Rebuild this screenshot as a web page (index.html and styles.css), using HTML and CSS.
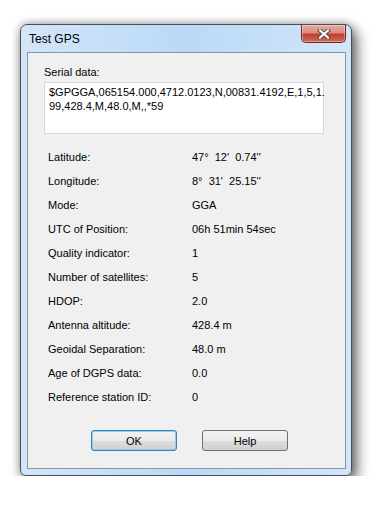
FILE: index.html
```html
<!DOCTYPE html>
<html>
	<head>
		<meta charset="utf-8">
		<title>Test GPS</title>
		<link rel="stylesheet" href="styles.css">
	</head>
	<body>
		<div class="window">
			<div class="titlebar">
				<span class="title">Test GPS</span>
				<button type="button" class="close">
					<svg width="14" height="10" viewBox="0 0 14 10">
						<path d="M3 1.5 L11 8.5 M11 1.5 L3 8.5" stroke="#4a4a4a" stroke-width="4" stroke-linecap="square"/>
						<path d="M3 1.5 L11 8.5 M11 1.5 L3 8.5" stroke="#ffffff" stroke-width="2.2" stroke-linecap="square"/>
					</svg>
				</button>
			</div>
			<div class="client">
				<div class="caption">Serial data:</div>
				<div class="serial">$GPGGA,065154.000,4712.0123,N,00831.4192,E,1,5,1.<br>99,428.4,M,48.0,M,,*59</div>
				<div class="fields">
					<span>Latitude:</span><span>47°&nbsp; 12'&nbsp; 0.74''</span>
					<span>Longitude:</span><span>8°&nbsp; 31'&nbsp; 25.15''</span>
					<span>Mode:</span><span>GGA</span>
					<span>UTC of Position:</span><span>06h 51min 54sec</span>
					<span>Quality indicator:</span><span>1</span>
					<span>Number of satellites:</span><span>5</span>
					<span>HDOP:</span><span>2.0</span>
					<span>Antenna altitude:</span><span>428.4 m</span>
					<span>Geoidal Separation:</span><span>48.0 m</span>
					<span>Age of DGPS data:</span><span>0.0</span>
					<span>Reference station ID:</span><span>0</span>
				</div>
				<div class="buttons">
					<button type="button" class="btn default">OK</button>
					<button type="button" class="btn">Help</button>
				</div>
			</div>
		</div>
	</body>
</html>
```

FILE: styles.css
```css
*{
	margin: 0;
	padding: 0;
	box-sizing: border-box;
}
body{
	background: #ffffff;
	font-family: "Liberation Sans", Arial, sans-serif;
	font-size: 11px;
	color: #000000;
}
.window{
	margin: 24px 0 0 20px;
	width: 332px;
	height: 452px;
	border: 1px solid #4b4f55;
	border-radius: 7px 7px 6px 6px;
	padding: 0 5px 6px 6px;
	background: linear-gradient(to right, #d3e6f8 0%, #bad9f7 50%, #d3e6f8 100%);
	box-shadow: 5px 6px 14px rgba(0,0,0,0.55), 0 0 8px rgba(0,0,0,0.35);
	display: flex;
	flex-direction: column;
}
.titlebar{
	height: 27px;
	display: flex;
	align-items: flex-start;
}
.title{
	font-size: 12px;
	margin: 7px 0 0 2px;
	color: #000000;
}
.close{
	margin-left: auto;
	width: 45px;
	height: 18px;
	border: 1px solid #6b2a24;
	border-top: 0;
	border-radius: 0 0 5px 5px;
	background: linear-gradient(to bottom, #e8aba0 0%, #d98b7f 45%, #c33f30 55%, #cf6a57 100%);
	box-shadow: inset 0 0 0 1px rgba(255,255,255,0.35);
	display: flex;
	align-items: center;
	justify-content: center;
}
.close svg{
	display: block;
}
.client{
	flex: 1;
	background: #f0f0f0;
	border: 1px solid #8796a9;
	padding: 13px 0 0 16px;
}
.caption{
	line-height: 13px;
}
.serial{
	margin-top: 3px;
	width: 280px;
	height: 52px;
	background: #ffffff;
	border: 1px solid #d5d8dc;
	padding: 2px 4px 0;
	line-height: 14px;
}
.fields{
	margin: 11px 0 0 4px;
	display: grid;
	grid-template-columns: 144px 1fr;
	grid-auto-rows: 24px;
	align-items: center;
}
.buttons{
	margin-top: 21px;
	padding-left: 47px;
	display: flex;
	gap: 25px;
}
.btn{
	width: 86px;
	height: 21px;
	border: 1px solid #707070;
	border-radius: 3px;
	background: linear-gradient(to bottom, #f2f2f2 0%, #ebebeb 50%, #dddddd 51%, #cfcfcf 100%);
	font-family: "Liberation Sans", Arial, sans-serif;
	font-size: 11px;
	color: #000000;
}
.btn.default{
	border-color: #3c7fb1;
	box-shadow: inset 0 0 0 1px #8fd0ef;
}
```
